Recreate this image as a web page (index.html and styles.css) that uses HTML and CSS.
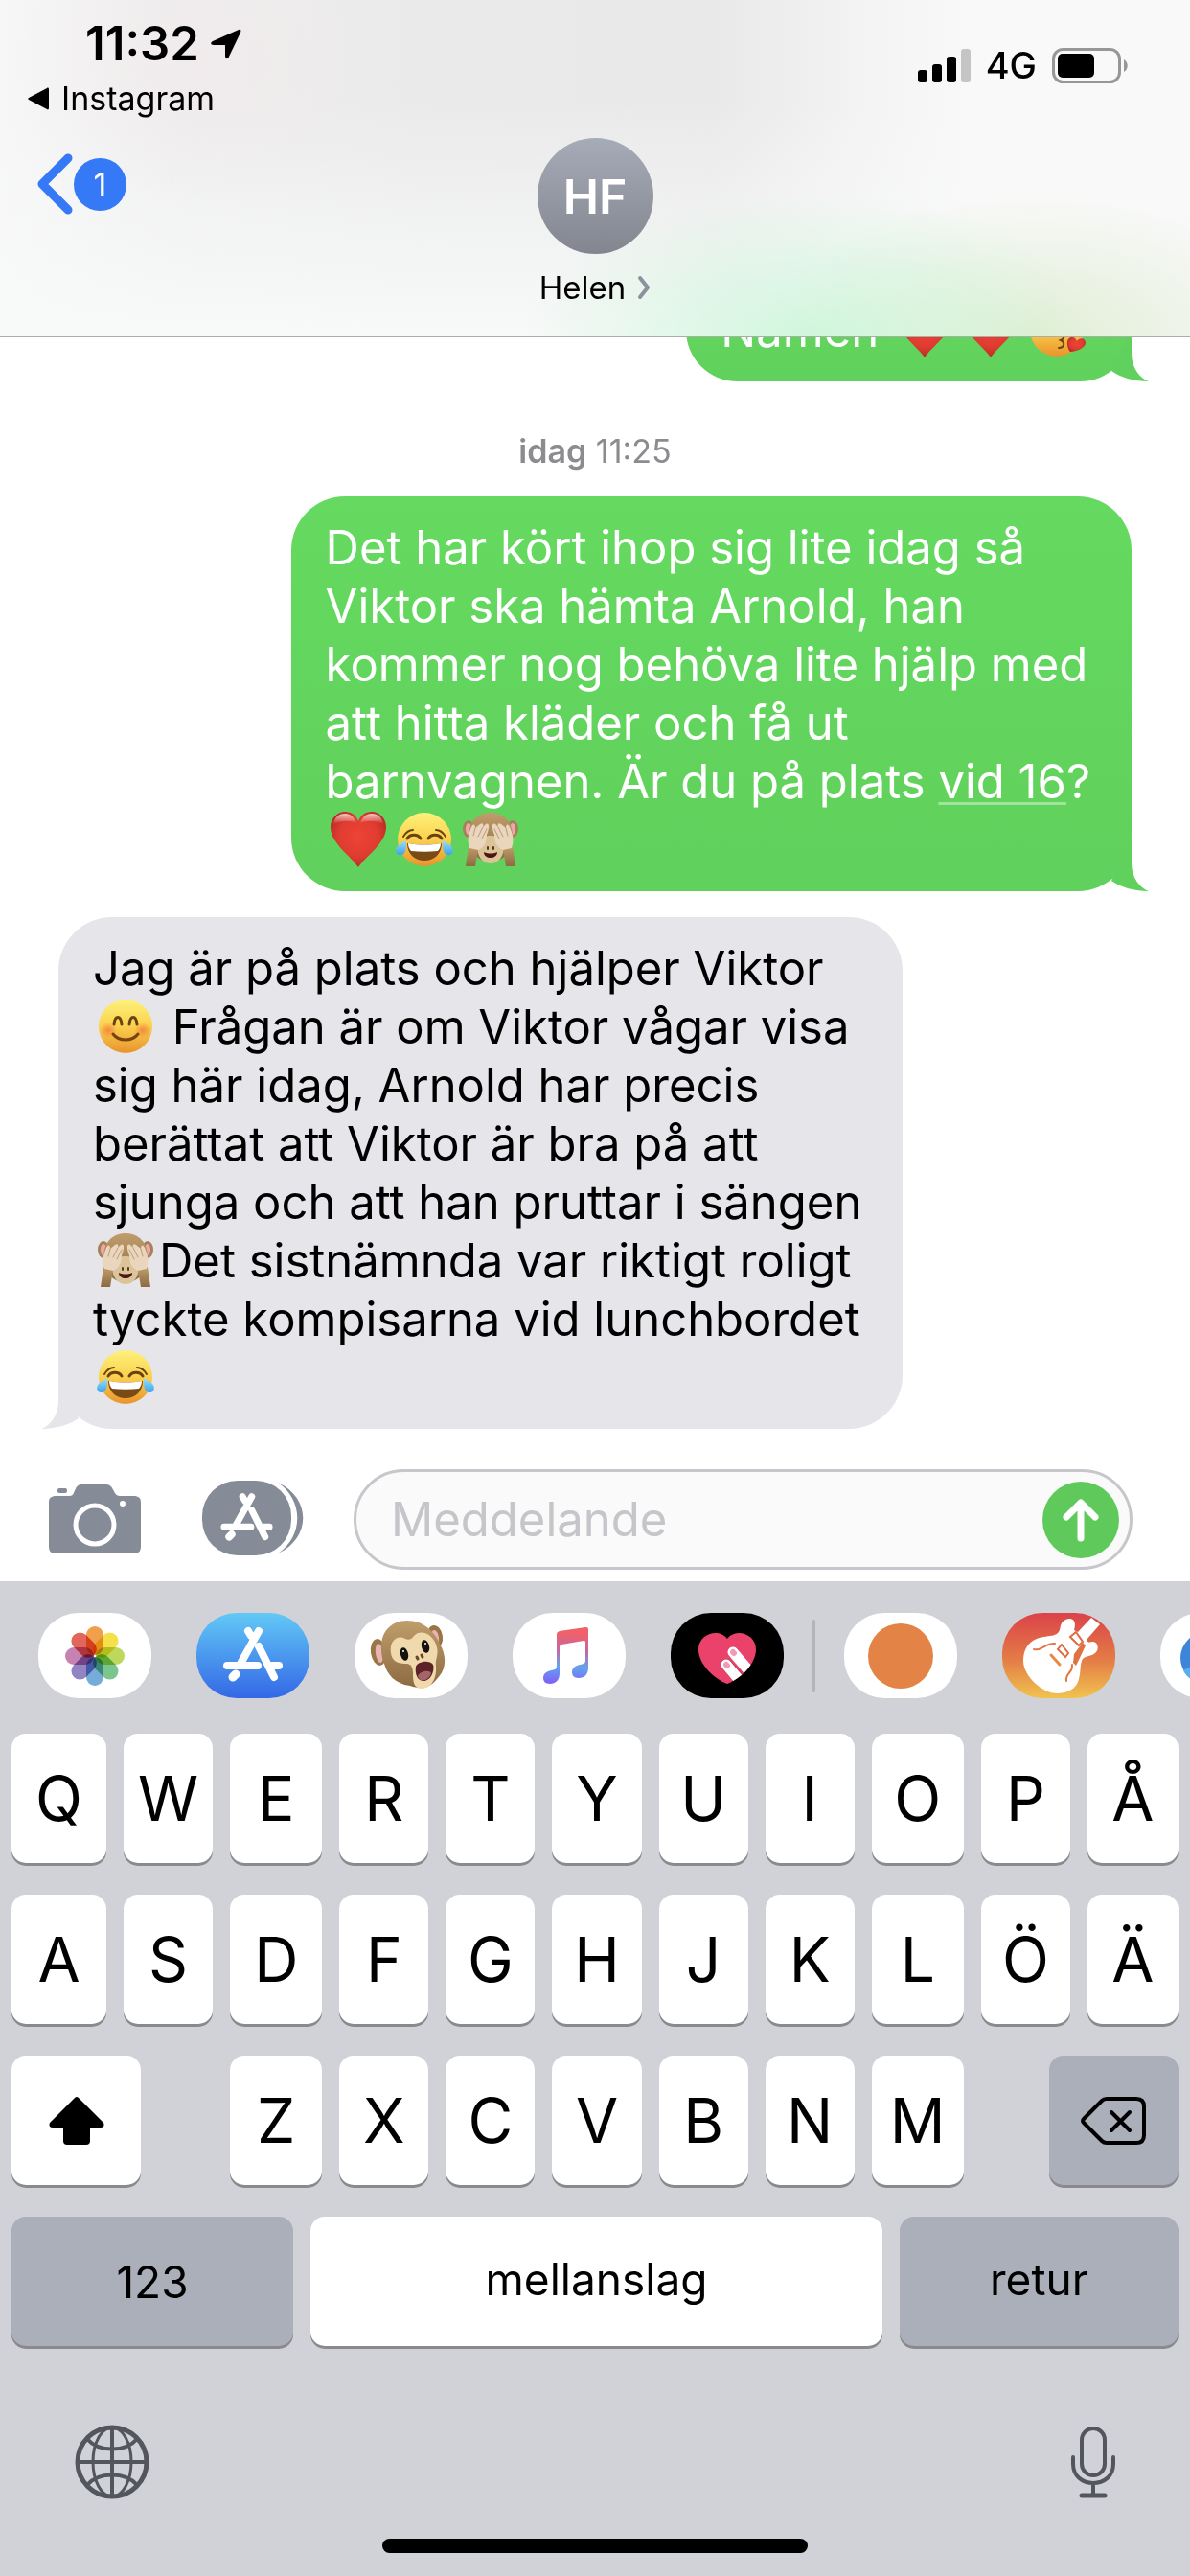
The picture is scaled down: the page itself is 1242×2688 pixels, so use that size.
FILE: index.html
```html
<!DOCTYPE html>
<html lang="sv">
<head>
    <meta charset="UTF-8">
    <meta name="viewport" content="width=device-width, initial-scale=1.0">
    <title>Helen</title>
    <link rel="stylesheet" href="styles.css">
</head>
<body>

<!-- Shared drawings -->
<svg class="defs" width="0" height="0" aria-hidden="true">
    <defs>
        <radialGradient id="heartFill" cx="50%" cy="45%" r="60%">
            <stop offset="0" stop-color="#ee4436"/>
            <stop offset="0.6" stop-color="#df3c30"/>
            <stop offset="1" stop-color="#b3261f"/>
        </radialGradient>
        <linearGradient id="shine" x1="0" y1="0" x2="0" y2="1">
            <stop offset="0" stop-color="#fff" stop-opacity="0.75"/>
            <stop offset="1" stop-color="#fff" stop-opacity="0"/>
        </linearGradient>
        <linearGradient id="faceFill" x1="0" y1="0" x2="0" y2="1">
            <stop offset="0" stop-color="#fdf27b"/>
            <stop offset="0.5" stop-color="#fbd04d"/>
            <stop offset="1" stop-color="#e8932c"/>
        </linearGradient>
        <linearGradient id="tearFill" x1="0" y1="0" x2="0" y2="1">
            <stop offset="0" stop-color="#9be0fb"/>
            <stop offset="1" stop-color="#3ba3ea"/>
        </linearGradient>
        <linearGradient id="furFill" x1="0" y1="0" x2="0" y2="1">
            <stop offset="0" stop-color="#c09d6b"/>
            <stop offset="1" stop-color="#8d6a41"/>
        </linearGradient>
        <radialGradient id="blush">
            <stop offset="0" stop-color="#f0703a" stop-opacity="0.7"/>
            <stop offset="1" stop-color="#f0703a" stop-opacity="0"/>
        </radialGradient>
    </defs>
    <symbol id="heart" viewBox="0 0 60 60">
        <path d="M30 59C22 47 1 34 1 17C1 8 8 1 16 1C23 1 28 5 30 11C32 5 37 1 44 1C52 1 59 8 59 17C59 34 38 47 30 59Z" fill="url(#heartFill)"/>
        <path d="M4 14C5 6 11 3 16 3C22 3 26 7 28 13C22 10 12 10 4 14Z" fill="url(#shine)"/>
        <path d="M56 14C55 6 49 3 44 3C38 3 34 7 32 13C38 10 48 10 56 14Z" fill="url(#shine)"/>
    </symbol>
    <symbol id="joy" viewBox="0 0 60 60">
        <circle cx="30" cy="30" r="28" fill="url(#faceFill)"/>
        <path d="M8 27C11 22 15 20 18 20M52 27C49 22 45 20 42 20" fill="none" stroke="#6b4312" stroke-width="2" stroke-linecap="round"/>
        <path d="M12 29C15 24 23 24 26 29M34 29C37 24 45 24 48 29" fill="none" stroke="#6b4312" stroke-width="3" stroke-linecap="round"/>
        <path d="M12 34C24 36 36 36 48 34C48 45 40 52 30 52C20 52 12 45 12 34Z" fill="#7a4a14"/>
        <path d="M13 34C24 36 36 36 47 34C47 37 46 40 44 42C35 43 25 43 16 42C14 40 13 37 13 34Z" fill="#fff"/>
        <path d="M11 31C11 38 11 46 5 46C-1 46 -1 39 3 36Z" fill="url(#tearFill)"/>
        <path d="M49 31C49 38 49 46 55 46C61 46 61 39 57 36Z" fill="url(#tearFill)"/>
    </symbol>
    <symbol id="smile" viewBox="0 0 60 60">
        <circle cx="30" cy="30" r="28" fill="url(#faceFill)"/>
        <ellipse cx="12" cy="34" rx="9" ry="8" fill="url(#blush)"/>
        <ellipse cx="48" cy="34" rx="9" ry="8" fill="url(#blush)"/>
        <path d="M18 28C19 18 25 18 26 28M34 28C35 18 41 18 42 28" fill="none" stroke="#6b4312" stroke-width="3" stroke-linecap="round"/>
        <path d="M17 38C23 46 37 46 43 38" fill="none" stroke="#7a4312" stroke-width="3" stroke-linecap="round"/>
    </symbol>
    <symbol id="monkey" viewBox="0 0 60 60">
        <ellipse cx="7" cy="19" rx="6" ry="9" fill="#a58256"/>
        <ellipse cx="53" cy="19" rx="6" ry="9" fill="#a58256"/>
        <ellipse cx="7" cy="19" rx="3" ry="6" fill="#efa7ae"/>
        <ellipse cx="53" cy="19" rx="3" ry="6" fill="#efa7ae"/>
        <path d="M30 2C44 2 53 12 53 27C53 43 43 53 30 53C17 53 7 43 7 27C7 12 16 2 30 2Z" fill="url(#furFill)"/>
        <path d="M17 32C20 24 40 24 43 32C46 44 40 55 30 55C20 55 14 44 17 32Z" fill="#dcc49a"/>
        <path d="M23 43C28 45 32 45 37 43C37 51 23 51 23 43Z" fill="#4d1613"/>
        <path d="M27 38V40M33 38V40" stroke="#5a3a1c" stroke-width="2" stroke-linecap="round"/>
        <path d="M7 37L17 40L14 58H4Z" fill="url(#furFill)"/>
        <path d="M53 37L43 40L46 58H56Z" fill="url(#furFill)"/>
        <path d="M8 39C5 30 7 24 10 17C12 13 14 14 14 18L19 14C22 12 23 14 22 17L25 14C29 12 29 18 26 25C26 32 24 38 17 41Z" fill="#ead5bd"/>
        <path d="M52 39C55 30 53 24 50 17C48 13 46 14 46 18L41 14C38 12 37 14 38 17L35 14C31 12 31 18 34 25C34 32 36 38 43 41Z" fill="#ead5bd"/>
        <path d="M14 18L12 26M22 17L17 27M26 19L21 29M46 18L48 26M38 17L43 27M34 19L39 29" stroke="#b99b79" stroke-width="1" stroke-linecap="round"/>
    </symbol>
    <symbol id="kiss" viewBox="0 0 60 60">
        <circle cx="30" cy="30" r="28" fill="url(#faceFill)"/>
        <path d="M14 22C17 18 21 18 24 22M37 22C40 18 44 18 47 22" fill="none" stroke="#6b4312" stroke-width="3" stroke-linecap="round"/>
        <path d="M32 35C38 35 39 39 34 41C39 43 38 49 32 49" fill="none" stroke="#6b4312" stroke-width="2" stroke-linecap="round"/>
        <path d="M44 53C40 48 39 38 46 38C49 38 50 40 51 42C53 38 60 38 60 44C60 49 50 53 44 53Z" fill="url(#heartFill)"/>
    </symbol>
    <symbol id="tail" viewBox="0 0 70 54">
        <path d="M52 0V25C52 40 61 51 70 54C55 54 41 50 31 43Z"/>
    </symbol>
    <symbol id="storeMark" viewBox="0 0 118 89">
        <g fill="none" stroke="#fff" stroke-width="8" stroke-linecap="round">
            <path d="M65 19L46 53M54 19L57 24M65 35L81 67M32 55H64M79 55H86"/>
            <path d="M41 64L38 67" stroke-width="9"/>
        </g>
    </symbol>
</svg>

<header class="header">
    <div class="status">
        <div class="status-left">
            <div class="clock">
                <span>11:32</span>
                <svg width="32" height="32" viewBox="0 0 32 32"><path d="M29 1L2 13C-1 15 0 17 3 17H14C15 17 15 17 15 18V28C15 32 18 32 19 29L31 4C32 1 31 0 29 1Z"/></svg>
            </div>
            <a class="return" href="#">
                <svg width="22" height="24" viewBox="0 0 22 24"><path d="M20 1C21 0 22 1 22 2V22C22 23 21 24 20 23L1 13C0 12 0 12 1 11Z"/></svg>
                Instagram
            </a>
        </div>
        <div class="status-right">
            <svg width="55" height="35" viewBox="0 0 55 35">
                <rect x="0" y="22" width="10" height="13" rx="3"/>
                <rect x="15" y="16" width="10" height="19" rx="3"/>
                <rect x="30" y="8" width="10" height="27" rx="3"/>
                <rect x="45" y="0" width="10" height="35" rx="3" fill="#c5c5c5"/>
            </svg>
            <span class="network">4G</span>
            <svg width="80" height="37" viewBox="0 0 80 37">
                <rect x="1.5" y="1.5" width="69" height="34" rx="10" fill="none" stroke="#979797" stroke-width="3"/>
                <rect x="6" y="6" width="38" height="25" rx="5"/>
                <path d="M75 12C80 15 80 22 75 25Z" fill="#979797"/>
            </svg>
        </div>
    </div>
    <div class="nav">
        <button class="back" type="button">
            <svg width="38" height="64" viewBox="0 0 38 64"><path d="M33 5L6 32L33 59" fill="none" stroke="#3579f6" stroke-width="9" stroke-linecap="round" stroke-linejoin="round"/></svg>
            <span class="unread">1</span>
        </button>
        <button class="contact" type="button">
            <span class="avatar">HF</span>
            <span class="contact-name">
                Helen
                <svg width="14" height="26" viewBox="0 0 14 26"><path d="M3 3L11 13L3 23" fill="none" stroke="#8c929d" stroke-width="4" stroke-linecap="round" stroke-linejoin="round"/></svg>
            </span>
        </button>
    </div>
</header>

<main class="thread">
    <div class="bubble sent">
        Nämen <svg class="emoji"><use href="#heart"/></svg><svg class="emoji"><use href="#heart"/></svg><svg class="emoji"><use href="#kiss"/></svg>
        <svg class="tail"><use href="#tail"/></svg>
    </div>
    <div class="date"><b>idag</b> 11:25</div>
    <div class="bubble sent">
        Det har kört ihop sig lite idag så<br>
        Viktor ska hämta Arnold, han<br>
        kommer nog behöva lite hjälp med<br>
        att hitta kläder och få ut<br>
        barnvagnen. Är du på plats <a href="#">vid 16</a>?<br>
        <svg class="emoji"><use href="#heart"/></svg><svg class="emoji"><use href="#joy"/></svg><svg class="emoji"><use href="#monkey"/></svg>
        <svg class="tail"><use href="#tail"/></svg>
    </div>
    <div class="bubble received">
        Jag är på plats och hjälper Viktor<br>
        <svg class="emoji"><use href="#smile"/></svg> Frågan är om Viktor vågar visa<br>
        sig här idag, Arnold har precis<br>
        berättat att Viktor är bra på att<br>
        sjunga och att han pruttar i sängen<br>
        <svg class="emoji"><use href="#monkey"/></svg>Det sistnämnda var riktigt roligt<br>
        tyckte kompisarna vid lunchbordet<br>
        <svg class="emoji"><use href="#joy"/></svg>
        <svg class="tail"><use href="#tail"/></svg>
    </div>
</main>

<form class="composer">
    <button class="tool" type="button" aria-label="Kamera">
        <svg width="96" height="73" viewBox="0 0 96 73">
            <rect x="9" y="5" width="10" height="5" rx="2" fill="#858c98"/>
            <path d="M8 13H22C28 13 26 1 34 1H60C68 1 67 13 74 13H88C94 13 96 15 96 20V65C96 71 94 73 88 73H8C2 73 0 71 0 65V20C0 15 2 13 8 13Z" fill="#858c98"/>
            <circle cx="48" cy="43" r="20" fill="none" stroke="#fff" stroke-width="5"/>
            <circle cx="77" cy="21" r="3" fill="#fff"/>
        </svg>
    </button>
    <button class="tool" type="button" aria-label="Appar">
        <svg width="106" height="78" viewBox="0 0 106 78">
            <rect x="0" y="0" width="93" height="78" rx="37" fill="#858c98"/>
            <path d="M79 2C114 18 114 60 79 76C106 58 106 20 79 2Z" fill="#858c98"/>
            <use href="#storeMark" x="-5" y="0" width="103" height="78"/>
        </svg>
    </button>
    <div class="field">
        <input type="text" placeholder="Meddelande" aria-label="Meddelande">
        <button class="send" type="submit" aria-label="Skicka">
            <svg width="80" height="80" viewBox="0 0 80 80"><path d="M40 59V24M25 37L40 22L55 37" fill="none" stroke="#fff" stroke-width="7" stroke-linecap="round" stroke-linejoin="round"/></svg>
        </button>
    </div>
</form>

<section class="keyboard">
    <div class="apps">
        <button class="app" type="button" aria-label="Bilder">
            <svg viewBox="0 0 118 89">
                <g class="petals" transform="translate(59 45)">
                    <rect x="-9" y="-31" width="18" height="30" rx="9" fill="#f0a04b"/>
                    <rect x="-9" y="-31" width="18" height="30" rx="9" fill="#f3e04a" transform="rotate(45)"/>
                    <rect x="-9" y="-31" width="18" height="30" rx="9" fill="#bdd85c" transform="rotate(90)"/>
                    <rect x="-9" y="-31" width="18" height="30" rx="9" fill="#7cc58e" transform="rotate(135)"/>
                    <rect x="-9" y="-31" width="18" height="30" rx="9" fill="#75acd9" transform="rotate(180)"/>
                    <rect x="-9" y="-31" width="18" height="30" rx="9" fill="#9283c2" transform="rotate(225)"/>
                    <rect x="-9" y="-31" width="18" height="30" rx="9" fill="#c682b0" transform="rotate(270)"/>
                    <rect x="-9" y="-31" width="18" height="30" rx="9" fill="#e2665c" transform="rotate(315)"/>
                </g>
            </svg>
        </button>
        <button class="app store" type="button" aria-label="App Store">
            <svg viewBox="0 0 118 89"><use href="#storeMark"/></svg>
        </button>
        <button class="app" type="button" aria-label="Animoji">
            <svg viewBox="0 0 118 89">
                <ellipse cx="25" cy="41" rx="8" ry="14" fill="#9a7645" transform="rotate(-8 25 41)"/>
                <ellipse cx="26" cy="42" rx="4" ry="10" fill="#e9b4b4" transform="rotate(-8 26 42)"/>
                <ellipse cx="84" cy="25" rx="8" ry="12" fill="#9a7645" transform="rotate(-8 84 25)"/>
                <ellipse cx="84" cy="26" rx="4" ry="8" fill="#e9b4b4" transform="rotate(-8 84 26)"/>
                <path d="M28 38C27 20 38 8 55 8C72 8 84 19 91 36C97 50 94 61 86 69C78 79 69 80 58 76C42 74 34 64 31 53C29 48 28 43 28 38Z" fill="url(#furFill)"/>
                <path d="M38 42C36 30 44 22 53 27C57 29 60 27 62 24C69 16 83 22 86 36C88 44 84 48 85 56C86 70 79 79 70 79C62 79 61 72 61 64C61 58 60 54 55 53C46 53 39 51 38 42Z" fill="#efd9ad"/>
                <ellipse cx="52" cy="43" rx="4" ry="7" fill="#15120f" transform="rotate(-14 52 43)"/>
                <ellipse cx="74" cy="35" rx="4" ry="7" fill="#15120f" transform="rotate(-14 74 35)"/>
                <circle cx="51" cy="40" r="1" fill="#fff"/>
                <circle cx="74" cy="32" r="1" fill="#fff"/>
                <path d="M65 46L66 48M70 44L71 46" stroke="#6b4527" stroke-width="3" stroke-linecap="round"/>
                <path d="M64 56C65 51 78 48 82 54C84 61 79 72 71 71C65 70 63 63 64 56Z" fill="#5b2326"/>
                <path d="M66 66C68 61 78 59 80 63C78 70 69 74 66 66Z" fill="#a4656a"/>
            </svg>
        </button>
        <button class="app" type="button" aria-label="Musik">
            <svg viewBox="0 0 118 89">
                <defs>
                    <linearGradient id="note" gradientUnits="userSpaceOnUse" x1="60" y1="15" x2="56" y2="74">
                        <stop offset="0.1" stop-color="#f0616a"/>
                        <stop offset="0.4" stop-color="#c8659f"/>
                        <stop offset="0.7" stop-color="#62a4ef"/>
                        <stop offset="1" stop-color="#7f62f5"/>
                    </linearGradient>
                </defs>
                <path d="M46 23C46 20 47 20 49 19L76 15C78 15 79 15 79 18V57C79 64 75 68 69 68C64 68 62 65 62 62C62 57 66 55 70 54C75 53 76 53 76 49V31C76 29 75 29 74 29L51 33C50 33 49 34 49 36V63C49 70 45 74 39 74C34 74 32 71 32 68C32 63 36 61 40 60C45 59 46 59 46 55Z" fill="url(#note)"/>
            </svg>
        </button>
        <button class="app touch" type="button" aria-label="Digital Touch">
            <svg viewBox="0 0 118 89">
                <clipPath id="touchHeart"><path d="M59 74C46 69 29 54 29 38C29 22 50 15 59 27C68 15 89 22 89 38C89 54 72 69 59 74Z"/></clipPath>
                <g clip-path="url(#touchHeart)">
                    <rect width="118" height="89" fill="#ea426a"/>
                    <path d="M58 54L78 76" stroke="#b82f53" stroke-width="12" stroke-linecap="round"/>
                    <path d="M65 41L90 70" stroke="#fff" stroke-width="11" stroke-linecap="round"/>
                    <path d="M58 54L80 80" stroke="#fff" stroke-width="11" stroke-linecap="round"/>
                    <path d="M65 41L66 42M58 54L59 55" stroke="#f19ab3" stroke-width="6" stroke-linecap="round"/>
                </g>
            </svg>
        </button>
        <span class="divider"></span>
        <button class="app" type="button" aria-label="App">
            <svg viewBox="0 0 118 89"><circle cx="59" cy="45" r="34" fill="#e38446"/></svg>
        </button>
        <button class="app garage" type="button" aria-label="GarageBand">
            <svg viewBox="0 0 118 89">
                <path d="M22 50C22 40 26 33 32 29C38 25 44 25 50 24C60 23 60 18 61 13C63 8 66 6 71 6C76 7 77 11 75 18L79 20L93 5L102 12L88 28C90 32 92 30 95 30C100 31 101 37 98 41C94 46 85 44 83 50C81 56 82 62 80 69C78 79 68 84 57 84C42 84 22 66 22 50Z" fill="#fff"/>
                <path d="M74 52L75 43L84 31L87 34L80 49L77 55Z" fill="#e07142"/>
                <path d="M77 20L84 30L80 34L71 25ZM62 33L69 42L66 46L58 38Z" fill="#fff" stroke="#e06a42" stroke-width="2"/>
                <path d="M51 44L60 54" stroke="#e88a46" stroke-width="3" stroke-linecap="round"/>
                <path d="M33 38C42 40 45 31 55 32M67 71C66 62 74 63 73 54" fill="none" stroke="#e27845" stroke-width="2" stroke-linecap="round"/>
            </svg>
        </button>
        <button class="app" type="button" aria-label="Fler">
            <svg viewBox="0 0 118 89">
                <circle cx="48" cy="47" r="27" fill="#3d85d8"/>
                <path d="M24 60C35 53 45 54 55 60L48 74C38 74 28 69 24 60Z" fill="#59aef0"/>
            </svg>
        </button>
    </div>

    <div class="keys">
        <button class="key" type="button">Q</button>
        <button class="key" type="button">W</button>
        <button class="key" type="button">E</button>
        <button class="key" type="button">R</button>
        <button class="key" type="button">T</button>
        <button class="key" type="button">Y</button>
        <button class="key" type="button">U</button>
        <button class="key" type="button">I</button>
        <button class="key" type="button">O</button>
        <button class="key" type="button">P</button>
        <button class="key" type="button">Å</button>

        <button class="key" type="button">A</button>
        <button class="key" type="button">S</button>
        <button class="key" type="button">D</button>
        <button class="key" type="button">F</button>
        <button class="key" type="button">G</button>
        <button class="key" type="button">H</button>
        <button class="key" type="button">J</button>
        <button class="key" type="button">K</button>
        <button class="key" type="button">L</button>
        <button class="key" type="button">Ö</button>
        <button class="key" type="button">Ä</button>

        <button class="key shift" type="button" aria-label="Skift">
            <svg width="58" height="50" viewBox="0 0 58 50"><path d="M27 1Q29 -1 31 1L57 27Q58 29 57 31Q56 32 54 32H43V46Q43 50 39 50H19Q15 50 15 46V32H4Q2 32 1 31Q0 29 1 27Z"/></svg>
        </button>
        <button class="key" type="button">Z</button>
        <button class="key" type="button">X</button>
        <button class="key" type="button">C</button>
        <button class="key" type="button">V</button>
        <button class="key" type="button">B</button>
        <button class="key" type="button">N</button>
        <button class="key" type="button">M</button>
        <button class="key dark delete" type="button" aria-label="Radera">
            <svg width="68" height="50" viewBox="0 0 68 50"><path d="M27 2H58Q66 2 66 10V40Q66 48 58 48H27Q24 48 22 46L3 27Q1 25 3 23L22 4Q24 2 27 2ZM32 16L51 35M51 16L32 35" fill="none" stroke="#000" stroke-width="4" stroke-linecap="round" stroke-linejoin="round"/></svg>
        </button>
    </div>
    <div class="keys wide">
        <button class="key dark" type="button">123</button>
        <button class="key word" type="button">mellanslag</button>
        <button class="key dark word" type="button">retur</button>
    </div>

    <div class="dock">
        <button type="button" aria-label="Byt språk">
            <svg width="78" height="78" viewBox="0 0 78 78">
                <g fill="none" stroke="#53565c" stroke-width="4">
                    <circle cx="39" cy="39" r="36" stroke-width="5"/>
                    <ellipse cx="39" cy="39" rx="20" ry="36" stroke-width="3"/>
                    <path d="M39 3V75M3 39H75M13 15C25 29 53 29 65 15M13 63C25 49 53 49 65 63"/>
                </g>
            </svg>
        </button>
        <button type="button" aria-label="Diktera">
            <svg width="46" height="76" viewBox="0 0 46 76">
                <g fill="none" stroke="#53565c" stroke-width="4" stroke-linecap="round">
                    <rect x="11" y="3" width="24" height="49" rx="12"/>
                    <path d="M2 33V40C2 53 12 60 23 60C34 60 44 53 44 40V33M23 60V72"/>
                    <path d="M11 73H35" stroke-width="5"/>
                </g>
            </svg>
        </button>
    </div>
    <div class="home-bar"></div>
</section>

</body>
</html>
```
FILE: styles.css
```css
* {
    box-sizing: border-box;
}

body {
    margin: 0;
    height: 100vh;
    display: flex;
    flex-direction: column;
    overflow: hidden;
    background-color: #fff;
    color: #000;
    font-family: Inter, "Liberation Sans", sans-serif;
}

button,
input {
    font: inherit;
    color: inherit;
    border: none;
    background: none;
    padding: 0;
    margin: 0;
}

a {
    color: inherit;
    text-decoration: none;
}

svg {
    display: block;
    flex: none;
}

.defs {
    position: absolute;
}

/* Header */
.header {
    flex: none;
    border-bottom: 1px solid #a9adab;
    background:
        radial-gradient(ellipse 300px 150px at 68% 100%, rgba(196, 246, 212, 0.75), rgba(200, 248, 214, 0)),
        radial-gradient(ellipse 280px 150px at 87% 100%, rgba(214, 232, 194, 0.65), rgba(220, 244, 205, 0)),
        radial-gradient(ellipse 200px 150px at 17% 18%, rgba(243, 232, 234, 0.5), rgba(243, 234, 234, 0)),
        linear-gradient(to bottom, rgba(248, 248, 248, 0) 30%, #f8f9f9 100%),
        linear-gradient(to right, #f7f7f7 0%, #eeeeee 15%, #eaeaea 35%, #e9e9e9 60%, #f5f5f5 75%, #f9f9f9 82%);
}

.status {
    display: flex;
    justify-content: space-between;
    padding: 16px 64px 0 29px;
}

.clock {
    display: flex;
    align-items: center;
    gap: 12px;
    padding-left: 60px;
    font-size: 49px;
    font-weight: 600;
    line-height: 60px;
}

.return {
    display: flex;
    align-items: center;
    gap: 13px;
    margin-top: 7px;
    font-size: 34px;
    line-height: 40px;
}

.status-right {
    display: flex;
    align-items: center;
    gap: 16px;
    height: 40px;
    margin-top: 32px;
}

.network {
    font-size: 38px;
    font-weight: 500;
}

.nav {
    display: grid;
    grid-template-columns: 1fr auto 1fr;
    align-items: start;
    padding: 21px 38px 31px;
}

.back {
    display: flex;
    align-items: center;
    gap: 1px;
    margin-top: 16px;
}

.unread {
    width: 55px;
    height: 55px;
    border-radius: 50%;
    background-color: #3579f6;
    color: #fff;
    font-size: 34px;
    line-height: 55px;
    text-align: center;
}

.contact {
    display: flex;
    flex-direction: column;
    align-items: center;
    gap: 15px;
}

.avatar {
    width: 121px;
    height: 121px;
    border-radius: 50%;
    background: linear-gradient(#a6abb8, #83868f);
    color: #fff;
    font-size: 50px;
    font-weight: 600;
    line-height: 123px;
}

.contact-name {
    display: flex;
    align-items: center;
    gap: 12px;
    font-size: 33px;
    line-height: 40px;
}

/* Messages */
.thread {
    flex: 1;
    min-height: 0;
    display: flex;
    flex-direction: column;
    justify-content: flex-end;
    overflow: hidden;
    padding: 0 61px;
}

.bubble {
    position: relative;
    flex: none;
    padding: 23px 43px 23px 36px;
    border-radius: 56px;
    font-size: 49px;
    line-height: 61px;
    white-space: nowrap;
}

.sent {
    align-self: flex-end;
    background: linear-gradient(#65d960, #60d15c);
    color: #fff;
}

.received {
    align-self: flex-start;
    margin-top: 27px;
    background-color: #e5e5ea;
}

.bubble a {
    text-decoration: underline;
    text-decoration-color: rgba(255, 255, 255, 0.4);
    text-decoration-thickness: 3px;
    text-underline-offset: 4px;
}

.emoji {
    display: inline-block;
    width: 60px;
    height: 60px;
    margin: 0 5px 0 4px;
    vertical-align: -12px;
}

.tail {
    position: absolute;
    right: -18px;
    bottom: 0;
    width: 70px;
    height: 54px;
    fill: #60d15c;
}

.received .tail {
    right: auto;
    left: -18px;
    fill: #e5e5ea;
    transform: scaleX(-1);
}

.date {
    margin: 53px 0 27px;
    color: #8b8b90;
    font-size: 34px;
    line-height: 40px;
    text-align: center;
}

.date b {
    font-weight: 600;
}

/* Message field */
.composer {
    flex: none;
    display: flex;
    align-items: center;
    padding: 42px 60px 12px 51px;
}

.tool {
    flex: none;
    margin-right: 64px;
    padding-bottom: 3px;
}

.tool + .tool {
    margin-right: 52px;
}

.field {
    flex: 1;
    min-width: 0;
    display: flex;
    align-items: center;
    height: 105px;
    padding: 0 11px 0 36px;
    border: 3px solid #c6c6cb;
    border-radius: 53px;
    background-color: #fafafa;
}

.field input {
    flex: 1;
    min-width: 0;
    font-size: 49px;
    outline: none;
}

.field input::placeholder {
    color: #c5c5ca;
    opacity: 1;
}

.send {
    flex: none;
    width: 80px;
    height: 80px;
    border-radius: 50%;
    background-color: #5fca5b;
}

/* Keyboard */
.keyboard {
    flex: none;
    background-color: #d1d2d8;
}

.apps {
    display: flex;
    align-items: center;
    gap: 47px;
    padding: 33px 0 37px 40px;
    overflow: hidden;
}

.app {
    flex: none;
    width: 118px;
    height: 89px;
    border-radius: 42px;
    background-color: #fff;
    overflow: hidden;
}

.store {
    background: linear-gradient(#62c8f6, #3468e6);
}

.touch {
    background-color: #000;
}

.garage {
    background: linear-gradient(#da434a, #e47c46 55%, #f0c350);
}

.petals rect {
    mix-blend-mode: multiply;
}

.divider {
    flex: none;
    width: 3px;
    height: 76px;
    margin: 0 -17px;
    border-radius: 2px;
    background-color: #b4b5ba;
}

.keys {
    display: grid;
    grid-template-columns: 99fr 93fr 96fr 93fr 93fr 93fr 93fr 93fr 96fr 93fr 95fr;
    gap: 33px 18px;
    padding: 0 12px 33px;
}

.key {
    display: flex;
    align-items: center;
    justify-content: center;
    height: 135px;
    border-radius: 15px;
    background-color: #fff;
    box-shadow: 0 3px 0 #898a8d;
    font-size: 64px;
}

.dark {
    background-color: #abafba;
}

.shift {
    grid-column: span 2;
    width: 135px;
}

.delete {
    grid-column: span 2;
    justify-self: end;
    width: 135px;
}

.wide {
    grid-template-columns: 294fr 597fr 291fr;
    padding-bottom: 0;
}

.wide .key {
    font-size: 46px;
}

.word {
    padding-bottom: 6px;
}

.dock {
    display: flex;
    align-items: center;
    justify-content: space-between;
    padding: 82px 78px 41px;
}

.home-bar {
    width: 444px;
    height: 15px;
    margin: 0 auto 24px;
    border-radius: 8px;
    background-color: #000;
}
```
